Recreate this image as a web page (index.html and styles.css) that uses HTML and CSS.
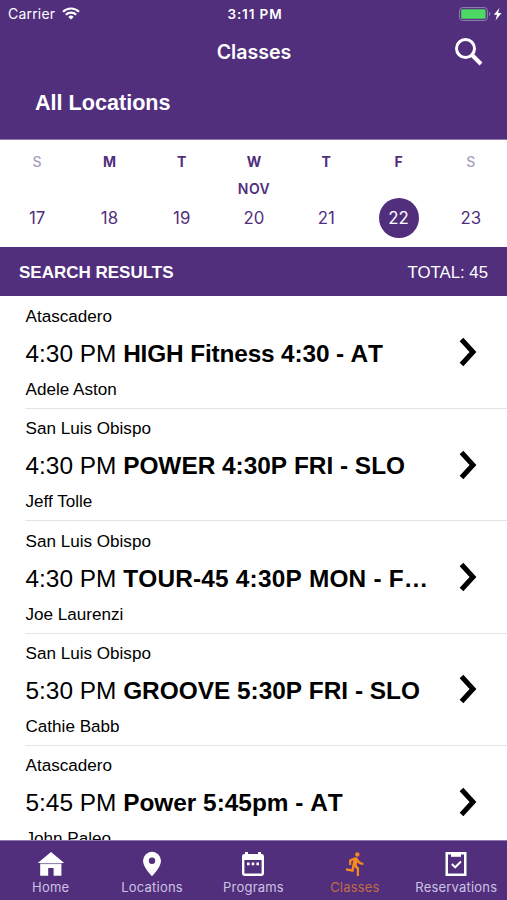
FILE: index.html
```html
<!DOCTYPE html>
<html lang="en">
<head>
    <meta charset="utf-8">
    <title>Classes</title>
    <link rel="stylesheet" href="styles.css">
</head>
<body>
    <header>
        <div class="status">
            <div class="carrier">
                <span>Carrier</span>
                <svg width="18" height="13" viewBox="0 0 18 13" fill="none" stroke="#fff" stroke-width="2.2">
                    <path d="M1 4.8a11.4 11.4 0 0 1 16 0M3.8 7.8a7.4 7.4 0 0 1 10.4 0"/>
                    <path d="M9 12.6L6.3 9.9a3.9 3.9 0 0 1 5.4 0z" fill="#fff" stroke="none"/>
                </svg>
            </div>
            <span class="clock">3:11 PM</span>
            <div class="battery">
                <svg width="43" height="14" viewBox="0 0 43 14">
                    <rect x=".6" y=".6" width="27.8" height="12.8" rx="3" fill="none" stroke="#9684b3"/>
                    <rect x="2.2" y="2.2" width="24.4" height="9.6" rx="1.2" fill="#4cd964"/>
                    <path d="M30 5v4a2.2 2.2 0 0 0 0-4z" fill="#9684b3"/>
                    <path d="M40.5 1L34.8 7.7H38l-1.5 5.7 6-7.3h-3.4z" fill="#fff"/>
                </svg>
            </div>
        </div>
        <div class="navbar">
            <h1>Classes</h1>
            <svg class="search" width="30" height="30" viewBox="0 0 30 30" fill="none" stroke="#fff">
                <circle cx="11.5" cy="11.5" r="9" stroke-width="3"/>
                <path d="M18 18l9 9" stroke-width="4"/>
            </svg>
        </div>
        <h2>All Locations</h2>
    </header>

    <div class="week">
        <div class="day weekend"><b>S</b><i></i><span>17</span></div>
        <div class="day"><b>M</b><i></i><span>18</span></div>
        <div class="day"><b>T</b><i></i><span>19</span></div>
        <div class="day"><b>W</b><i>NOV</i><span>20</span></div>
        <div class="day"><b>T</b><i></i><span>21</span></div>
        <div class="day selected"><b>F</b><i></i><span>22</span></div>
        <div class="day weekend"><b>S</b><i></i><span>23</span></div>
    </div>

    <div class="results">
        <strong>SEARCH RESULTS</strong>
        <span>TOTAL: 45</span>
    </div>

    <main>
        <div class="item">
            <div class="info">
                <p>Atascadero</p>
                <h3>4:30 PM <b class="tight">HIGH Fitness 4:30 - AT</b></h3>
                <p>Adele Aston</p>
            </div>
            <svg class="arrow" viewBox="0 0 18 30"><path d="M2.5 2.5L14 15 2.5 27.5"/></svg>
        </div>
        <div class="item">
            <div class="info">
                <p>San Luis Obispo</p>
                <h3>4:30 PM <b>POWER 4:30P FRI - SLO</b></h3>
                <p>Jeff Tolle</p>
            </div>
            <svg class="arrow" viewBox="0 0 18 30"><path d="M2.5 2.5L14 15 2.5 27.5"/></svg>
        </div>
        <div class="item">
            <div class="info">
                <p>San Luis Obispo</p>
                <h3>4:30 PM <b class="wide">TOUR-45 4:30P MON - F…</b></h3>
                <p>Joe Laurenzi</p>
            </div>
            <svg class="arrow" viewBox="0 0 18 30"><path d="M2.5 2.5L14 15 2.5 27.5"/></svg>
        </div>
        <div class="item">
            <div class="info">
                <p>San Luis Obispo</p>
                <h3>5:30 PM <b>GROOVE 5:30P FRI - SLO</b></h3>
                <p>Cathie Babb</p>
            </div>
            <svg class="arrow" viewBox="0 0 18 30"><path d="M2.5 2.5L14 15 2.5 27.5"/></svg>
        </div>
        <div class="item">
            <div class="info">
                <p>Atascadero</p>
                <h3>5:45 PM <b>Power 5:45pm - AT</b></h3>
                <p>John Paleo</p>
            </div>
            <svg class="arrow" viewBox="0 0 18 30"><path d="M2.5 2.5L14 15 2.5 27.5"/></svg>
        </div>
    </main>

    <nav>
        <a class="tab">
            <svg width="28" height="26" viewBox="0 0 28 26"><path d="M14 1L.8 12h2.4v12.8h8V17h5.4v7.8h7.8V12h2.8z"/><path class="line" d="M3 12.6h22"/></svg>
            <span>Home</span>
        </a>
        <a class="tab">
            <svg width="28" height="26" viewBox="0 0 28 26"><path fill-rule="evenodd" d="M14 .8a9 9 0 0 0-9 9c0 6.5 9 15.4 9 15.4s9-8.9 9-15.4a9 9 0 0 0-9-9zm0 5.8a3.2 3.2 0 1 1 0 6.4 3.2 3.2 0 0 1 0-6.4z"/></svg>
            <span>Locations</span>
        </a>
        <a class="tab">
            <svg width="28" height="26" viewBox="0 0 28 26"><path fill-rule="evenodd" d="M6 1h3v2h10V1h3v2h.6A2.4 2.4 0 0 1 25 5.4v17.2a2.4 2.4 0 0 1-2.4 2.4H5.4A2.4 2.4 0 0 1 3 22.6V5.4A2.4 2.4 0 0 1 5.4 3H6zM5.4 9v13.6h17.2V9z"/><path d="M8 11.6h2.6v2.6H8zM12.7 11.6h2.6v2.6h-2.6zM17.4 11.6H20v2.6h-2.6z"/></svg>
            <span>Programs</span>
        </a>
        <a class="tab active">
            <svg width="28" height="26" viewBox="0 0 28 26"><path transform="translate(1.5 -.4) scale(1.1)" d="M13.49 5.48c1.1 0 2-.9 2-2s-.9-2-2-2-2 .9-2 2 .9 2 2 2zm-3.6 13.9l1-4.4 2.1 2v6h2v-7.5l-2.1-2 .6-3c1.3 1.5 3.3 2.5 5.5 2.5v-2c-1.9 0-3.5-1-4.3-2.4l-1-1.6c-.4-.6-1-1-1.7-1-.3 0-.5.1-.8.1l-5.2 2.2v4.7h2v-3.4l1.8-.7-1.6 8.1-4.9-1-.4 2z"/></svg>
            <span>Classes</span>
        </a>
        <a class="tab">
            <svg width="28" height="26" viewBox="0 0 28 26"><path fill-rule="evenodd" d="M3.5 1h21v24h-21zM6 3.4v19.2h16V3.4z"/><path d="M9 1h10v4.8H9z"/><path d="M9.8 13l3.4 3.3 5.8-5.8" fill="none" stroke="#fff" stroke-width="2"/></svg>
            <span>Reservations</span>
        </a>
    </nav>
</body>
</html>
```

FILE: styles.css
```css
* {
    box-sizing: border-box;
}

body {
    font-family: "Liberation Sans", Arial, sans-serif;
    margin: 0;
    height: 900px;
    display: flex;
    flex-direction: column;
    overflow: hidden;
    background-color: #fff;
    color: #000;
}

h1, h2, h3, p {
    margin: 0;
}

header {
    height: 140px;
    flex: none;
    background-color: #512f7d;
    border-bottom: 1px solid #8c78aa;
    color: #fff;
}

.status {
    display: grid;
    grid-template-columns: 1fr auto 1fr;
    align-items: center;
    height: 27px;
    padding: 0 5px 0 8px;
    font-family: Inter, sans-serif;
    font-size: 14px;
}

.carrier {
    display: flex;
    align-items: center;
    gap: 7px;
    letter-spacing: 0.2px;
}

.clock {
    font-size: 13.5px;
    font-weight: 600;
    letter-spacing: 0.9px;
}

.battery {
    display: flex;
    justify-content: flex-end;
}

.navbar {
    display: grid;
    grid-template-columns: 1fr auto 1fr;
    align-items: center;
    height: 50px;
    padding-right: 23px;
    padding-left: 24px;
}

.navbar h1 {
    grid-column: 2;
    font-family: Inter, sans-serif;
    font-size: 19.6px;
    font-weight: 600;
}

.search {
    justify-self: end;
}

header h2 {
    padding-left: 35px;
    font-size: 21.6px;
    line-height: 52px;
}

.week {
    display: grid;
    grid-template-columns: repeat(7, 1fr);
    height: 107px;
    flex: none;
    padding: 11px 0 0 1px;
    font-family: Inter, sans-serif;
    color: #512f7d;
}

.day {
    display: flex;
    flex-direction: column;
    align-items: center;
}

.day b {
    font-size: 14px;
    font-weight: 700;
    line-height: 22px;
}

.day i {
    height: 25px;
    font-size: 14px;
    font-style: normal;
    font-weight: 600;
    line-height: 32px;
    letter-spacing: 0.4px;
}

.day span {
    width: 40px;
    height: 40px;
    border-radius: 50%;
    text-align: center;
    font-size: 16.8px;
    line-height: 40px;
}

.weekend b {
    color: #a99dc0;
    font-weight: 500;
}

.selected span {
    background-color: #512f7d;
    color: #fff;
}

.results {
    display: flex;
    justify-content: space-between;
    align-items: center;
    height: 49px;
    flex: none;
    padding: 2px 19px 0;
    background-color: #512f7d;
    color: #fff;
    font-size: 16.8px;
}

.results strong {
    font-size: 17px;
}

main {
    flex: 1;
    min-height: 0;
    padding-top: 0.6px;
    overflow: hidden;
}

.item {
    display: flex;
    justify-content: space-between;
    align-items: center;
    height: 112.4px;
    margin-left: 25px;
    padding-right: 30px;
    border-bottom: 1px solid #e4e4e4;
}

.info {
    padding: 2px 0 0 0.5px;
}

.item p {
    font-size: 17.1px;
    line-height: 30px;
}

.item h3 {
    font-size: 24.4px;
    font-weight: normal;
    line-height: 43px;
    white-space: nowrap;
}

.item h3 b {
    font-kerning: none;
}

.item h3 .tight {
    letter-spacing: -0.15px;
}

.item h3 .wide {
    letter-spacing: 0.2px;
}

.arrow {
    width: 18px;
    height: 30px;
    fill: none;
    stroke: #000;
    stroke-width: 5;
}

nav {
    display: grid;
    grid-template-columns: repeat(5, 1fr);
    height: 60px;
    flex: none;
    background-color: #512f7d;
    border-top: 1px solid #8c78aa;
}

.tab {
    display: flex;
    flex-direction: column;
    align-items: center;
    padding-top: 10px;
    color: #cfc2e2;
    font-family: Inter, sans-serif;
    font-size: 13px;
    letter-spacing: 0.2px;
    line-height: 20px;
}

.tab svg {
    fill: #fff;
}

.tab .line {
    stroke: #8c78aa;
}

.active {
    color: #c26a45;
}

.tab.active svg {
    fill: #f58a1f;
}
```
